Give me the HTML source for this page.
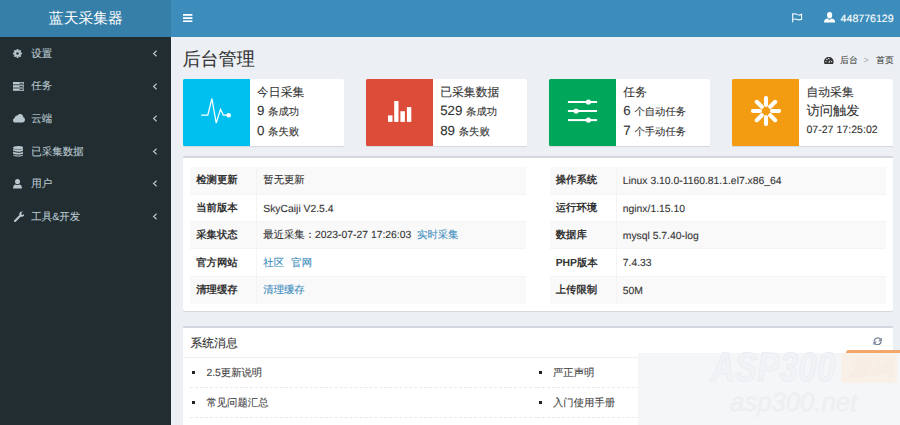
<!DOCTYPE html>
<html><head><meta charset="utf-8">
<style>
*{box-sizing:border-box;margin:0;padding:0}
html,body{text-rendering:geometricPrecision;-webkit-text-stroke:0.1px currentColor;width:900px;height:425px;overflow:hidden;background:#ecf0f5;font-family:"Liberation Sans",sans-serif;color:#333;font-size:10.36px}
.abs{position:absolute}
#logo{left:0;top:0;width:170.7px;height:37px;background:#367fa9;color:#fff;font-size:14.8px;line-height:38.4px;-webkit-text-stroke:0;padding-left:1px;text-align:center}
#nav{left:170.7px;top:0;width:730px;height:37px;background:#3c8dbc}
#side{left:0;top:37px;width:170.7px;height:388px;background:#222d32}
.mi{position:absolute;left:0;width:170px;height:32.6px;line-height:32.6px;color:#b8c7ce;font-size:10.36px}
.mi span{position:absolute;left:31.2px;top:0.9px;font-size:10.5px;-webkit-text-stroke:0.12px #b8c7ce}
.mi svg.ic{position:absolute}
.mi svg.ch{position:absolute;left:151.8px;top:13px}
h1{position:absolute;left:182.4px;top:47px;font-size:18.1px;font-weight:normal;line-height:24px;color:#333}
.bc{position:absolute;top:52.7px;font-size:8.9px;line-height:14px;color:#444}
.ib{position:absolute;top:79px;height:67px;width:160.6px;background:#fff;border-radius:1.5px;box-shadow:0 0.74px 0.74px rgba(0,0,0,.1)}
.ib .icb{position:absolute;left:0;top:0;width:66.6px;height:67px;border-radius:1.5px 0 0 1.5px}
.ib .t{position:absolute;left:74px;white-space:nowrap}
.box{position:absolute;left:183px;width:710px;background:#fff;border-top:2.2px solid #d2d6de;border-radius:2px;box-shadow:0 0.74px 0.74px rgba(0,0,0,.1)}
table{position:absolute;border-collapse:collapse;width:336px;top:8.4px}
td,th{height:27.4px;padding:2.4px 5.9px 0;text-align:left;vertical-align:middle;border-top:0.74px solid #f4f4f4;white-space:nowrap;font-size:10.36px}
th{font-weight:bold;-webkit-text-stroke:0;width:66.6px;border-right:0.74px solid #f4f4f4}
tr:nth-child(odd){background:#f9f9f9}
tr:first-child td,tr:first-child th{border-top:0}
a{color:#3c8dbc;text-decoration:none}
ul.ml{position:absolute;top:29.6px;width:347px;list-style:none}
ul.ml li{position:relative;height:30px;line-height:30px;padding-top:1px;padding-left:16px;border-bottom:0.9px dashed #e9e9e9;font-size:10.36px;color:#444}
ul.ml li:before{content:"";position:absolute;left:1.8px;top:13.3px;width:3px;height:3px;background:#222}
</style></head><body>
<div id="logo" class="abs">蓝天采集器</div>
<div id="nav" class="abs"></div>
<!-- hamburger -->
<svg class="abs" style="left:182.6px;top:13.9px" width="10" height="8.2" viewBox="0 0 10 8.2"><rect x="0" y="0" width="9.4" height="1.8" fill="#fff"/><rect x="0" y="3.2" width="9.4" height="1.8" fill="#fff"/><rect x="0" y="6.4" width="9.4" height="1.8" fill="#fff"/></svg>
<!-- flag -->
<svg class="abs" style="left:792px;top:13.2px" width="10.5" height="9.4" viewBox="0 0 10.5 9.4"><path d="M0.7 0.2 V9.2" stroke="#fff" stroke-width="1.1"/><path d="M1.2 1.2 C2.8 0.4 4 0.9 5.2 1.6 C6.6 2.3 8 2.1 9.6 1.2 V6.2 C8 7.1 6.6 7.1 5.2 6.5 C4 6 2.8 5.6 1.2 6.4" fill="none" stroke="#fff" stroke-width="1.05"/></svg>
<!-- user -->
<svg class="abs" style="left:823.8px;top:12.2px" width="11.5" height="11" viewBox="0 0 11.5 11"><path d="M5.6 0 C7.3 0 8.2 1.3 8.2 3 C8.2 4.8 7.2 6.6 5.6 6.6 C4 6.6 3 4.8 3 3 C3 1.3 3.9 0 5.6 0 Z" fill="#fff"/><path d="M0 10.6 C0 7.8 1.6 6.8 3.6 6.5 L5.6 8 L7.6 6.5 C9.6 6.8 11.2 7.8 11.2 10.6 Z" fill="#fff"/></svg>
<div class="abs" style="left:840.6px;top:12.6px;color:#fff;font-size:10.6px;line-height:12px">448776129</div>

<div id="side" class="abs"></div>
<div class="mi" style="top:37px"><svg class="ic" style="left:13px;top:12px" width="9" height="9" viewBox="0 0 10 10"><g fill="#b8c7ce"><circle cx="5" cy="5" r="3.6"/><g><rect x="4" y="0" width="2" height="2.2"/><rect x="4" y="7.8" width="2" height="2.2"/></g><g transform="rotate(45 5 5)"><rect x="4" y="0" width="2" height="2.2"/><rect x="4" y="7.8" width="2" height="2.2"/></g><g transform="rotate(90 5 5)"><rect x="4" y="0" width="2" height="2.2"/><rect x="4" y="7.8" width="2" height="2.2"/></g><g transform="rotate(135 5 5)"><rect x="4" y="0" width="2" height="2.2"/><rect x="4" y="7.8" width="2" height="2.2"/></g></g><circle cx="5" cy="5" r="1.4" fill="#222d32"/></svg><span>设置</span><svg class="ch" width="6" height="7" viewBox="0 0 6 7"><path d="M4.6 0.8 L1.6 3.5 L4.6 6.2" fill="none" stroke="#b8c7ce" stroke-width="1.15"/></svg></div>
<div class="mi" style="top:69.6px"><svg class="ic" style="left:12.8px;top:12px" width="11.5" height="9" viewBox="0 0 11.5 9"><g fill="#b8c7ce"><rect x="0" y="0" width="11.2" height="2.4"/><rect x="0" y="3.2" width="11.2" height="2.4"/><rect x="0" y="6.4" width="11.2" height="2.4"/></g><g fill="#222d32"><rect x="6.5" y="0.8" width="3.8" height="0.8"/><rect x="6.5" y="4" width="3.8" height="0.8"/><rect x="6.5" y="7.2" width="3.8" height="0.8"/></g></svg><span>任务</span><svg class="ch" width="6" height="7" viewBox="0 0 6 7"><path d="M4.6 0.8 L1.6 3.5 L4.6 6.2" fill="none" stroke="#b8c7ce" stroke-width="1.15"/></svg></div>
<div class="mi" style="top:102.2px"><svg class="ic" style="left:12.8px;top:11.4px" width="12" height="9" viewBox="0 0 12 9"><path d="M2.5 8.6 C0.9 8.6 0 7.5 0 6.2 C0 5 0.8 4.2 1.8 4 C1.8 2.5 3 1.4 4.4 1.6 C5 0.6 6 0 7.2 0 C9 0 10.3 1.4 10.3 3.2 C11.3 3.5 12 4.5 12 5.8 C12 7.4 10.8 8.6 9.4 8.6 Z" fill="#b8c7ce"/></svg><span>云端</span><svg class="ch" width="6" height="7" viewBox="0 0 6 7"><path d="M4.6 0.8 L1.6 3.5 L4.6 6.2" fill="none" stroke="#b8c7ce" stroke-width="1.15"/></svg></div>
<div class="mi" style="top:134.8px"><svg class="ic" style="left:12.8px;top:11px" width="10.5" height="11" viewBox="0 0 10.5 11"><g fill="#b8c7ce"><ellipse cx="5.2" cy="1.8" rx="5.1" ry="1.8"/><path d="M0.1 2.8 C1 4.2 9.4 4.2 10.3 2.8 V4.6 C9.4 6 1 6 0.1 4.6 Z"/><path d="M0.1 5.6 C1 7 9.4 7 10.3 5.6 V7.4 C9.4 8.8 1 8.8 0.1 7.4 Z"/><path d="M0.1 8.4 C1 9.8 9.4 9.8 10.3 8.4 V9.2 C9.4 11 1 11 0.1 9.2 Z"/></g></svg><span>已采集数据</span><svg class="ch" width="6" height="7" viewBox="0 0 6 7"><path d="M4.6 0.8 L1.6 3.5 L4.6 6.2" fill="none" stroke="#b8c7ce" stroke-width="1.15"/></svg></div>
<div class="mi" style="top:167.4px"><svg class="ic" style="left:12.8px;top:11.6px" width="9" height="10" viewBox="0 0 9 10"><g fill="#b8c7ce"><ellipse cx="4.5" cy="2.6" rx="2.5" ry="2.6"/><path d="M0 9.6 C0 6.8 1.2 5.5 2.6 5.4 C3.6 6.2 5.4 6.2 6.4 5.4 C7.8 5.5 9 6.8 9 9.6 Z"/></g></svg><span>用户</span><svg class="ch" width="6" height="7" viewBox="0 0 6 7"><path d="M4.6 0.8 L1.6 3.5 L4.6 6.2" fill="none" stroke="#b8c7ce" stroke-width="1.15"/></svg></div>
<div class="mi" style="top:200px"><svg class="ic" style="left:13.5px;top:11.2px" width="10.5" height="11" viewBox="0 0 10.5 11"><path d="M1 10 L6 5" stroke="#b8c7ce" stroke-width="2.2" stroke-linecap="round"/><path d="M5.2 3.6 C5.2 1.6 6.8 0.2 8.8 0.6 L7.2 2.2 L7.6 3.6 L9 4 L10.4 2.4 C10.8 4.4 9.2 6.2 7.2 5.8 Z" fill="#b8c7ce"/></svg><span>工具&amp;开发</span><svg class="ch" width="6" height="7" viewBox="0 0 6 7"><path d="M4.6 0.8 L1.6 3.5 L4.6 6.2" fill="none" stroke="#b8c7ce" stroke-width="1.15"/></svg></div>

<h1>后台管理</h1>
<svg class="abs" style="left:824.4px;top:56.6px" width="9.6" height="7.2" viewBox="0 0 9.6 7.2"><path d="M4.8 0 C7.5 0 9.6 2.1 9.6 4.8 C9.6 5.8 9.3 6.6 8.8 7.2 H0.8 C0.3 6.6 0 5.8 0 4.8 C0 2.1 2.1 0 4.8 0 Z" fill="#333"/><g fill="#ecf0f5"><circle cx="2" cy="4.6" r="0.7"/><circle cx="2.9" cy="2.4" r="0.7"/><circle cx="4.8" cy="1.5" r="0.7"/><circle cx="7.6" cy="4.6" r="0.7"/><path d="M4.2 5.6 L6.8 2.4 L5.4 6 Z"/></g></svg>
<div class="bc" style="left:840px">后台</div>
<div class="bc" style="left:863.5px;color:#aaa">&gt;</div>
<div class="bc" style="left:876px">首页</div>

<!-- info boxes -->
<div class="ib" style="left:183px"><div class="icb" style="background:#00c0ef"></div>
<svg class="abs" style="left:0;top:0" width="66" height="67" viewBox="0 0 66 67"><path d="M18.2 36.2 H24.8 L28.9 19.7 L33.2 44 L37.5 30.4 L40.4 36.2 H45.7" fill="none" stroke="#fff" stroke-width="1.25" stroke-linejoin="miter"/><circle cx="45.7" cy="36.2" r="2.3" fill="#fff"/></svg>
<div class="t" style="top:5px;font-size:11.84px;line-height:17px">今日采集</div>
<div class="t" style="top:22.3px;line-height:19px"><span style="font-size:13.3px">9 </span>条成功</div>
<div class="t" style="top:42px;line-height:19px"><span style="font-size:13.3px">0 </span>条失败</div>
</div>
<div class="ib" style="left:366.2px"><div class="icb" style="background:#dd4b39"></div>
<svg class="abs" style="left:21.6px;top:21.8px" width="24" height="22" viewBox="0 0 24 22"><g fill="#fff"><rect x="0" y="14.4" width="4.5" height="6.5"/><rect x="6.2" y="0" width="4.3" height="20.9"/><rect x="12.4" y="10.2" width="4.5" height="10.7"/><rect x="18.9" y="6.1" width="4.4" height="14.8"/></g></svg>
<div class="t" style="top:5px;font-size:11.84px;line-height:17px">已采集数据</div>
<div class="t" style="top:22.3px;line-height:19px"><span style="font-size:13.3px">529 </span>条成功</div>
<div class="t" style="top:42px;line-height:19px"><span style="font-size:13.3px">89 </span>条失败</div>
</div>
<div class="ib" style="left:549.3px"><div class="icb" style="background:#00a65a"></div>
<svg class="abs" style="left:18px;top:20px" width="32" height="24" viewBox="0 0 32 24"><g stroke="#fff" stroke-width="2" fill="none"><path d="M0.9 3 H30.1"/><path d="M0.9 12 H30.1"/><path d="M0.9 21.1 H30.1"/></g><g fill="#fff"><circle cx="21.4" cy="3" r="2.6"/><circle cx="9.1" cy="12" r="2.6"/><circle cx="21.4" cy="21.1" r="2.6"/></g></svg>
<div class="t" style="top:5px;font-size:11.84px;line-height:17px">任务</div>
<div class="t" style="top:22.3px;line-height:19px"><span style="font-size:13.3px">6 </span>个自动任务</div>
<div class="t" style="top:42px;line-height:19px"><span style="font-size:13.3px">7 </span>个手动任务</div>
</div>
<div class="ib" style="left:732.4px"><div class="icb" style="background:#f39c12"></div>
<svg class="abs" style="left:18.6px;top:16.8px" width="30" height="30" viewBox="0 0 30 30"><g stroke="#fff" stroke-width="4.1" stroke-linecap="round"><path d="M15 2 V9"/><path d="M15 21 V28"/><path d="M2 15 H9"/><path d="M21 15 H28"/><path d="M5.8 5.8 L10.8 10.8"/><path d="M19.2 19.2 L24.2 24.2"/><path d="M24.2 5.8 L19.2 10.8"/><path d="M10.8 19.2 L5.8 24.2"/></g></svg>
<div class="t" style="top:5px;font-size:11.84px;line-height:17px">自动采集</div>
<div class="t" style="top:22px;font-size:13.3px;line-height:20px">访问触发</div>
<div class="t" style="top:42.2px;line-height:19px;font-size:10.6px">07-27 17:25:02</div>
</div>

<!-- system info box -->
<div class="box" style="top:156.4px;height:154.5px">
<table style="left:7.3px">
<tr><th>检测更新</th><td>暂无更新</td></tr>
<tr><th>当前版本</th><td>SkyCaiji V2.5.4</td></tr>
<tr><th>采集状态</th><td>最近采集：2023-07-27 17:26:03 &nbsp;<a>实时采集</a></td></tr>
<tr><th>官方网站</th><td><a>社区</a> &nbsp;<a style="margin-left:1.5px">官网</a></td></tr>
<tr><th>清理缓存</th><td><a>清理缓存</a></td></tr>
</table>
<table style="left:366.8px">
<tr><th>操作系统</th><td>Linux 3.10.0-1160.81.1.el7.x86_64</td></tr>
<tr><th>运行环境</th><td>nginx/1.15.10</td></tr>
<tr><th>数据库</th><td>mysql 5.7.40-log</td></tr>
<tr><th>PHP版本</th><td>7.4.33</td></tr>
<tr><th>上传限制</th><td>50M</td></tr>
</table>
</div>

<!-- messages box -->
<div class="box" style="top:326.4px;height:120px">
<div class="abs" style="left:7.4px;top:6.3px;font-size:11.84px;line-height:17px">系统消息</div>
<svg class="abs" style="left:690.4px;top:8.4px" width="9.2" height="8.7" viewBox="0 0 10 9.5"><g fill="none" stroke="#7a8497" stroke-width="1.5"><path d="M1.2 4.4 A3.9 3.9 0 0 1 8.2 2.6"/><path d="M8.8 5.1 A3.9 3.9 0 0 1 1.8 6.9"/></g><g fill="#7a8497"><path d="M9.6 0.6 V4.6 H5.6 Z"/><path d="M0.4 8.9 V4.9 H4.4 Z"/></g></svg>
<div class="abs" style="left:0;top:28.9px;width:710px;height:0.9px;background:#f0f0f0"></div>
<ul class="ml" style="left:7.4px">
<li>2.5更新说明</li><li>常见问题汇总</li>
</ul>
<ul class="ml" style="left:354px">
<li>严正声明</li><li>入门使用手册</li>
</ul>
</div>
<!-- watermark overlay -->
<div class="abs" style="left:638px;top:353px;width:262px;height:72px;background:#f5f6f8"></div>
<div class="abs" style="left:710.5px;top:342.5px;font-size:41px;line-height:48px;font-weight:bold;font-style:italic;color:#f1f4f7;-webkit-text-stroke:1.2px #ebeff4;transform:scaleX(0.8);transform-origin:0 0;letter-spacing:0.5px">ASP300</div>
<div class="abs" style="left:841px;top:352.5px;width:56px;height:30.5px;border-radius:3px;background:#f9f0e8"></div>
<div class="abs" style="left:845.6px;top:350px;width:60px;height:3.2px;border-radius:5px 5px 0 0;background:#f2a66a"></div>
<div class="abs" style="left:849px;top:355px;font-size:22px;line-height:26px;font-weight:bold;font-style:italic;color:#f8ede3;-webkit-text-stroke:0">源码</div>
<div class="abs" style="left:730px;top:387px;font-size:26.5px;line-height:30px;font-weight:normal;font-style:italic;color:#eeeff2;-webkit-text-stroke:0.5px #eeeff2;transform:scaleX(0.97);transform-origin:0 0">asp300.net</div>
</body></html>
